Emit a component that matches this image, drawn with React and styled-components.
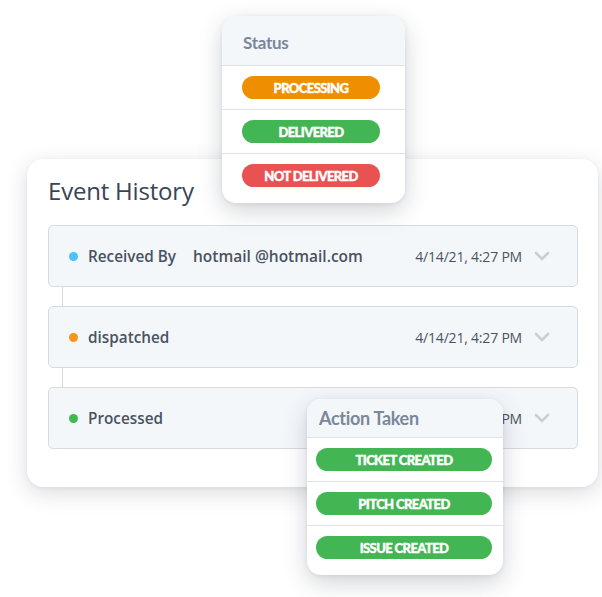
import React from 'react'
import styled, { createGlobalStyle } from 'styled-components'

const GlobalStyle = createGlobalStyle`
  html, body {
    margin: 0;
    padding: 0;
    background: #ffffff;
  }
  body {
    font-family: "Open Sans", "Noto Sans", Arial, sans-serif;
  }
`

const events = [
  { label: 'Received By', value: 'hotmail @hotmail.com', date: '4/14/21, 4:27 PM', dot: '#4cc3f7' },
  { label: 'dispatched', value: '', date: '4/14/21, 4:27 PM', dot: '#f7951d' },
  { label: 'Processed', value: '', date: '4/14/21, 4:27 PM', dot: '#40b950' },
]

const statuses = [
  { text: 'PROCESSING', color: '#ef8f00' },
  { text: 'DELIVERED', color: '#43b654' },
  { text: 'NOT DELIVERED', color: '#e85252' },
]

const actions = ['TICKET CREATED', 'PITCH CREATED', 'ISSUE CREATED']

const Chevron = () => (
  <svg width="16" height="10" viewBox="0 0 16 10">
    <path d="M2 2 L8 8 L14 2" fill="none" stroke="#c9cfd7" strokeWidth="2.6" strokeLinecap="round" strokeLinejoin="round" />
  </svg>
)

export default function App() {
  return (
    <>
      <GlobalStyle />
      <Stage>
        <Card>
          <Title>Event History</Title>
          <Timeline>
            {events.map((e, i) => (
              <React.Fragment key={e.label}>
                {i > 0 && <Connector />}
                <EventRow>
                  <Dot $color={e.dot} />
                  <Label>{e.label}</Label>
                  {e.value && <Value>{e.value}</Value>}
                  <DateText>{e.date}</DateText>
                  <Chevron />
                </EventRow>
              </React.Fragment>
            ))}
          </Timeline>
        </Card>

        <StatusPopover>
          <PopHeader $h={50}>Status</PopHeader>
          {statuses.map((s) => (
            <PopRow key={s.text}>
              <Badge $color={s.color} $w={138}>{s.text}</Badge>
            </PopRow>
          ))}
        </StatusPopover>

        <ActionPopover>
          <PopHeader $h={39} $pad={12} $size={18} $shift={0}>Action Taken</PopHeader>
          {actions.map((a) => (
            <PopRow key={a} $pad={9}>
              <Badge $color="#43b654" $w={176}>{a}</Badge>
            </PopRow>
          ))}
        </ActionPopover>
      </Stage>
    </>
  )
}

const Stage = styled.div`
  position: relative;
  width: 602px;
  height: 597px;
  padding: 159px 0 0 27px;
  box-sizing: border-box;
  overflow: hidden;
`

const Card = styled.div`
  width: 571px;
  height: 328px;
  box-sizing: border-box;
  background: #ffffff;
  border-radius: 16px;
  box-shadow: 0 6px 22px rgba(30, 40, 60, 0.16), 0 1px 4px rgba(30, 40, 60, 0.06);
  padding: 16px 20px 0 21px;
`

const Title = styled.h2`
  margin: 0;
  font-family: "Open Sans", "Noto Sans", sans-serif;
  font-weight: 400;
  font-size: 24px;
  line-height: 32px;
  color: #3a4454;
  letter-spacing: -0.2px;
`

const Timeline = styled.div`
  display: flex;
  flex-direction: column;
  margin-top: 18px;
`

const Connector = styled.div`
  width: 1px;
  height: 19px;
  margin-left: 14px;
  background: #d9dde3;
`

const EventRow = styled.div`
  display: flex;
  align-items: center;
  height: 62px;
  box-sizing: border-box;
  padding: 0 27px 0 20px;
  background: #f4f7fa;
  border: 1px solid #d6dbe1;
  border-radius: 5px;
  color: #4a5361;
`

const Dot = styled.span`
  width: 9px;
  height: 9px;
  border-radius: 50%;
  background: ${(p) => p.$color};
  margin-right: 10px;
  flex-shrink: 0;
`

const Label = styled.span`
  font-size: 15.3px;
  font-weight: 600;
`

const Value = styled.span`
  font-size: 15.5px;
  font-weight: 600;
  margin-left: 17px;
`

const DateText = styled.span`
  margin-left: auto;
  margin-right: 12px;
  font-size: 14px;
  font-weight: 400;
  letter-spacing: -0.2px;
`

const Popover = styled.div`
  position: absolute;
  background: #ffffff;
  border-radius: 14px;
  overflow: hidden;
  box-shadow: 0 8px 24px rgba(30, 40, 60, 0.2), 0 1px 4px rgba(30, 40, 60, 0.08);
  padding-bottom: 6px;
  font-family: Lato, "Open Sans", sans-serif;
`

const StatusPopover = styled(Popover)`
  left: 222px;
  top: 16px;
  width: 183px;
`

const ActionPopover = styled(Popover)`
  left: 307px;
  top: 399px;
  width: 196px;
`

const PopHeader = styled.div`
  height: ${(p) => p.$h}px;
  box-sizing: border-box;
  display: flex;
  align-items: center;
  padding-left: ${(p) => p.$pad || 21}px;
  padding-top: ${(p) => (p.$shift === undefined ? 4 : p.$shift)}px;
  background: #f4f7fa;
  border-bottom: 1px solid #dfe2e6;
  font-weight: 700;
  font-size: ${(p) => p.$size || 17}px;
  color: #7b879b;
  letter-spacing: -0.3px;
`

const PopRow = styled.div`
  height: 43px;
  display: flex;
  align-items: center;
  padding-left: ${(p) => p.$pad || 20}px;
  border-bottom: 1px solid #dfe2e6;
  &:last-child {
    border-bottom: none;
  }
`

const Badge = styled.span`
  width: ${(p) => p.$w}px;
  height: 23px;
  border-radius: 12px;
  background: ${(p) => p.$color};
  color: #ffffff;
  display: flex;
  align-items: center;
  justify-content: center;
  font-weight: 900;
  font-size: 13px;
  letter-spacing: -0.6px;
  -webkit-text-stroke: 0.4px #ffffff;
`
